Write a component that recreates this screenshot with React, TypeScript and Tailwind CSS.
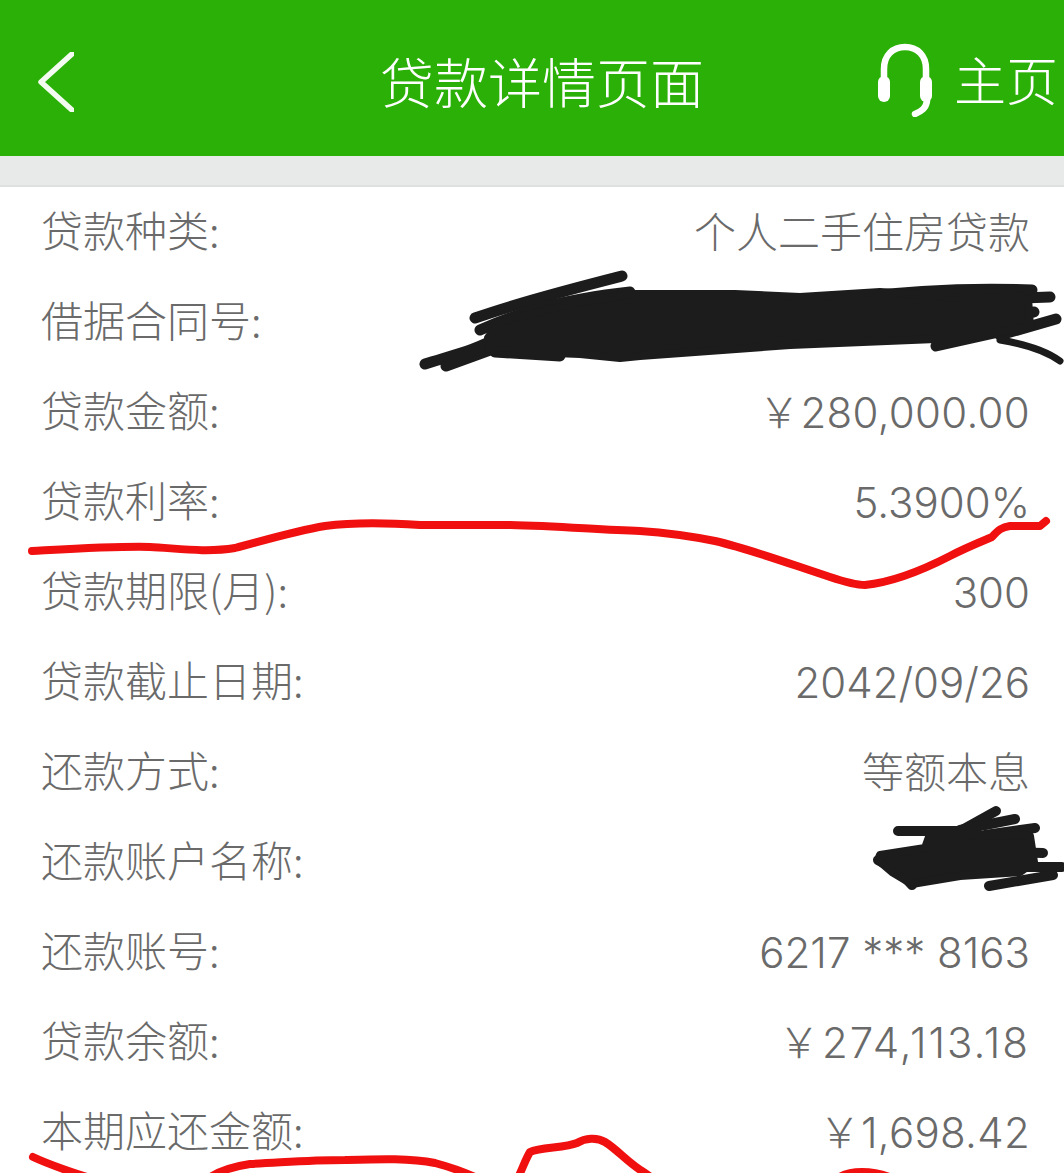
import React from 'react';

const rows = [
  { label: '贷款种类:', value: '个人二手住房贷款', valueClass: '' },
  { label: '借据合同号:', value: '', valueClass: '' },
  { label: '贷款金额:', value: '￥280,000.00', valueClass: 'tracking-[0.3px]' },
  { label: '贷款利率:', value: '5.3900%', valueClass: '' },
  { label: '贷款期限(月):', value: '300', valueClass: '' },
  { label: '贷款截止日期:', value: '2042/09/26', valueClass: '' },
  { label: '还款方式:', value: '等额本息', valueClass: '' },
  { label: '还款账户名称:', value: '', valueClass: '' },
  { label: '还款账号:', value: '6217 *** 8163', valueClass: '' },
  { label: '贷款余额:', value: '￥274,113.18', valueClass: 'tracking-[2px]' },
  { label: '本期应还金额:', value: '￥1,698.42', valueClass: 'tracking-[0.3px]' },
];

function Scribbles() {
  return (
    <svg className="absolute left-0 top-0" width="1064" height="1173" viewBox="0 0 1064 1173" fill="none" strokeLinecap="round" strokeLinejoin="round">
      {/* contract number */}
      <g stroke="#1c1c1c" strokeWidth="11">
        <path d="M475 318 C520 302 575 288 622 276" />
        <path d="M480 330 C520 312 560 300 630 292" />
        <path d="M425 364 C450 356 478 350 500 336" />
        <path d="M446 366 L490 350" />
        <path d="M850 298 C900 292 960 287 1032 290" />
        <path d="M960 300 L1050 297" />
        <path d="M950 320 L1034 312" />
        <path d="M1000 335 L1056 319" />
        <path d="M936 346 L1030 325" />
        <path d="M495 352 L560 356" />
      </g>
      <path d="M1000 340 C1025 344 1045 350 1060 361" stroke="#1c1c1c" strokeWidth="7" />
      <path
        d="M488 338 L500 322 L570 304 L630 294 L735 294 L800 297 L880 292 L960 298 L1028 298 L1030 326 L960 338 L790 345 L640 356 L620 358 L580 354 L530 352 L490 350 Z"
        fill="#1c1c1c"
        stroke="#1c1c1c"
        strokeWidth="8"
      />
      {/* account name */}
      <g stroke="#1c1c1c" strokeWidth="10">
        <path d="M898 831 L960 831 L996 811" />
        <path d="M960 830 L1015 819" />
        <path d="M985 835 L1035 828" />
        <path d="M1000 852 L1043 853" />
        <path d="M1020 867 L1062 867" />
        <path d="M989 886 L1053 875" />
        <path d="M878 860 L900 872 L912 885" />
      </g>
      <path
        d="M880 855 L925 848 L930 834 L1030 836 L1034 862 L1020 872 L960 876 L912 884 L892 872 L878 860 Z"
        fill="#1c1c1c"
        stroke="#1c1c1c"
        strokeWidth="8"
      />
      {/* red marker */}
      <g stroke="#f01010" strokeWidth="8">
        <path d="M32 551 C70 549 120 546 150 547 C175 548 205 553 235 548 C262 541 295 531 325 526 C355 522 390 523 420 525 C450 525 480 525 510 525 C560 526 600 530 640 531 C670 533 695 537 715 541 C750 549 790 564 830 577 C845 582 855 585 865 585 C885 583 915 574 950 556 C965 548 985 540 992 537 C998 530 1002 527 1010 526 L1040 526 L1046 521" />
        <path d="M33 1157 C50 1165 65 1170 90 1178" />
        <path d="M204 1182 C215 1172 230 1167 250 1164 C290 1162 310 1160 345 1160 C380 1159 410 1158 435 1163 C450 1167 470 1174 485 1182" />
        <path d="M516 1182 C522 1170 526 1158 530 1152 C540 1147 565 1148 577 1143 C585 1138 597 1137 605 1142 C618 1150 628 1163 645 1173 L655 1180" />
        <path d="M838 1178 C850 1170 872 1170 892 1178" />
      </g>
    </svg>
  );
}

export default function App() {
  return (
    <div className="relative h-[1173px] w-[1064px] overflow-hidden bg-white font-['Noto_Sans_CJK_SC',sans-serif]">
      <header className="relative flex h-[156px] items-center justify-between bg-[#2bb008] pl-[38px] pr-[6px] text-white">
        <svg className="mt-[8px]" width="36" height="60" viewBox="0 0 36 60" fill="none" stroke="#f4fbf0" strokeWidth="5.5" strokeLinecap="round" strokeLinejoin="round">
          <path d="M34 2 L3 30 L34 58" />
        </svg>
        <h1 className="absolute inset-x-0 top-[48px] pl-[20px] text-center text-[54px] leading-[66px] font-light">贷款详情页面</h1>
        <div className="flex items-center gap-[20px]">
          <svg className="mt-[4px]" width="58" height="74" viewBox="0 0 58 74" fill="none">
            <path d="M8 34 V26 C8 12 17 4 29 4 C41 4 50 12 50 26 V34" stroke="white" strokeWidth="6.5" />
            <rect x="2" y="33" width="12" height="26" rx="6" fill="white" />
            <rect x="44" y="33" width="12" height="26" rx="6" fill="white" />
            <path d="M51 58 C50 65 46 68 39 71" stroke="white" strokeWidth="6.5" strokeLinecap="round" />
          </svg>
          <span className="mt-[2px] text-[52px] leading-[66px] font-light">主页</span>
        </div>
      </header>
      <div className="h-[31px] border-b-[2px] border-[#dfe1e1] bg-[#e8eaea]" />
      <div className="pl-[41px] pr-[34px] text-[42px] font-light text-[#6a6a6a]">
        {rows.map((row) => (
          <div key={row.label} className="flex h-[90px] items-center justify-between">
            <span className="pb-[8px]">{row.label}</span>
            <span className={`font-['Inter','Noto_Sans_CJK_SC',sans-serif] ${row.valueClass}`}>{row.value}</span>
          </div>
        ))}
      </div>
      <Scribbles />
    </div>
  );
}
